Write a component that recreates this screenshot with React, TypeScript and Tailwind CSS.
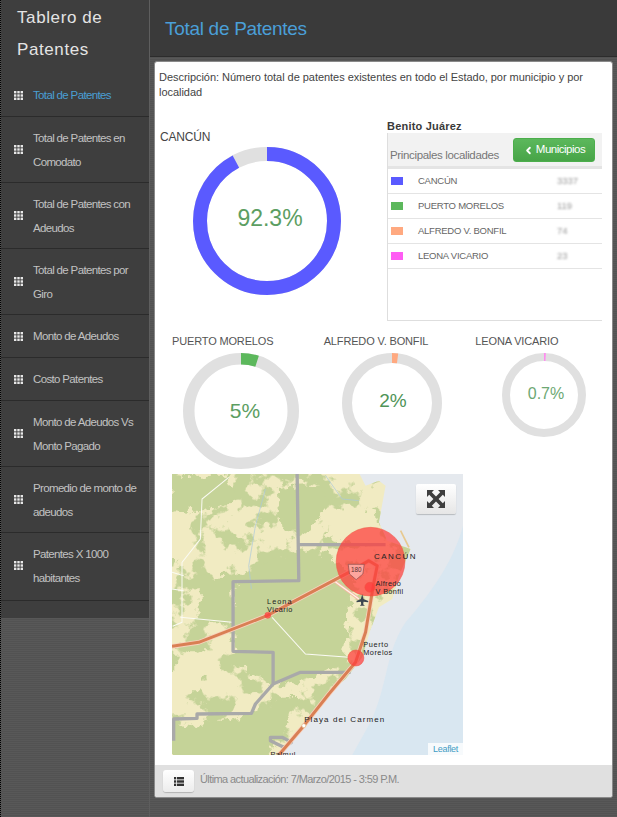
import { ChevronLeft } from 'lucide-react';

const menu = [
  { label: ['Total de Patentes'], active: true },
  { label: ['Total de Patentes en', 'Comodato'] },
  { label: ['Total de Patentes con', 'Adeudos'] },
  { label: ['Total de Patentes por', 'Giro'] },
  { label: ['Monto de Adeudos'] },
  { label: ['Costo Patentes'] },
  { label: ['Monto de Adeudos Vs', 'Monto Pagado'] },
  { label: ['Promedio de monto de', 'adeudos'] },
  { label: ['Patentes X 1000', 'habitantes'] },
];

const localities = [
  { name: 'CANCÚN', value: '3337', swatch: 'bg-[#5a5aff]' },
  { name: 'PUERTO MORELOS', value: '119', swatch: 'bg-[#5cb85c]' },
  { name: 'ALFREDO V. BONFIL', value: '74', swatch: 'bg-[#ffa980]' },
  { name: 'LEONA VICARIO', value: '23', swatch: 'bg-[#ff5cf4]' },
];

const HIGHWAY =
  'M20,542 L100,530 L305,450 L550,320 L610,285 L635,300 L625,350 L600,500 L570,590 L490,685 L415,780 L340,868';

function GridIcon() {
  return (
    <svg width="9" height="9" viewBox="0 0 9 9" fill="#e8e8e8" className="shrink-0">
      {[0, 3.3, 6.6].map((y) =>
        [0, 3.3, 6.6].map((x) => <rect key={`${x}-${y}`} x={x} y={y} width="2.4" height="2.4" />),
      )}
    </svg>
  );
}

function Donut(props: {
  size: number;
  stroke: number;
  percent: number;
  color: string;
  label: string;
  fontSize: number;
  dx: number;
  dy: number;
  textColor?: string;
}) {
  const { size, stroke, percent, color, label, fontSize, dx, dy, textColor = '#5c9e62' } = props;
  const c = size / 2;
  const r = c - stroke / 2;
  return (
    <svg width={size} height={size} viewBox={`0 0 ${size} ${size}`} className="block">
      <circle cx={c} cy={c} r={r} fill="none" stroke="#e0e0e0" strokeWidth={stroke} />
      <circle
        cx={c}
        cy={c}
        r={r}
        fill="none"
        stroke={color}
        strokeWidth={stroke}
        pathLength={100}
        strokeDasharray={`${percent} ${100 - percent}`}
        transform={`rotate(-90 ${c} ${c})`}
      />
      <text x={c + dx} y={c + dy} textAnchor="middle" dominantBaseline="central" fontSize={fontSize} fill={textColor}>
        {label}
      </text>
    </svg>
  );
}

function MapArt() {
  const land =
    'M20,25 H582 L600,60 L640,45 L660,60 L640,170 L665,225 L735,250 L700,330 L680,400 L640,425 L612,500 L590,575 L540,640 L480,690 L420,770 L370,835 L345,868 H20 Z';
  return (
    <svg viewBox="20 25 872 843" className="block h-full w-full" preserveAspectRatio="none">
      <defs>
        <filter id="mottle" x="0" y="0" width="100%" height="100%" colorInterpolationFilters="sRGB">
          <feTurbulence type="fractalNoise" baseFrequency="0.016" numOctaves="5" seed="11" />
          <feColorMatrix type="matrix" values="0 0 0 0 0.773  0 0 0 0 0.827  0 0 0 0 0.596  14 0 0 0 -7.1" />
        </filter>
        <filter id="rough" x="-20%" y="-20%" width="140%" height="140%" colorInterpolationFilters="sRGB">
          <feTurbulence type="fractalNoise" baseFrequency="0.03" numOctaves="4" seed="4" result="n" />
          <feDisplacementMap in="SourceGraphic" in2="n" scale="50" xChannelSelector="R" yChannelSelector="G" />
        </filter>
        <clipPath id="landClip">
          <path d={land} />
        </clipPath>
      </defs>
      <rect x="20" y="25" width="872" height="843" fill="#e5e9ee" />
      <path d="M892,180 C860,300 780,400 720,470 C660,560 670,640 620,760 L560,868 H892 Z" fill="#d9e7f1" />
      <path d={land} fill="#f1ebc2" />
      <g clipPath="url(#landClip)">
        <rect x="20" y="25" width="872" height="843" filter="url(#mottle)" />
        <g filter="url(#rough)" fill="#c5d398">
          <path d="M215,330 L400,250 L500,270 L570,345 L540,480 L535,590 L430,640 L330,660 L205,590 Z" />
          <path d="M340,70 L470,60 L480,140 L420,200 L345,190 Z" />
          <path d="M20,30 L190,30 L210,100 L110,140 L20,130 Z" />
          <path d="M20,790 L250,750 L330,700 L400,700 L350,800 L300,880 H20 Z" />
          <path d="M100,340 L200,330 L210,470 L100,470 Z" />
        </g>
        <g filter="url(#rough)" fill="#f1ebc2">
          <path d="M490,140 L630,130 L640,230 L560,240 L480,210 Z" />
          <path d="M30,560 L150,560 L110,680 L30,680 Z" />
          <path d="M20,190 L80,170 L70,290 L20,300 Z" />
        </g>
      </g>
      <path d="M705,195 L730,245" stroke="#e7c98f" strokeWidth="5" fill="none" />
      <path d="M300,70 L270,180 L250,300 L258,370" stroke="#a9c7dd" strokeWidth="2" fill="none" />
      <path d="M480,30 L530,100 L580,105" stroke="#a9c7dd" strokeWidth="2" fill="none" />
      <g stroke="#fbfbf4" strokeWidth="3" fill="none">
        <path d="M320,455 L420,565 L550,575" />
        <path d="M45,455 L200,470" />
        <path d="M190,35 L110,100 L105,220 L50,290 L50,470 L22,482" />
        <path d="M20,320 L55,330 M20,370 L55,375" />
      </g>
      <g stroke="#a9a9a9" strokeWidth="10" fill="none" strokeLinejoin="round">
        <path d="M395,25 L400,345 L203,348 L203,557 L323,560 L323,655 L270,715 L258,743 L95,745 L95,758 L25,760 L25,825" />
        <path d="M400,237 L660,237" />
        <path d="M323,655 L405,620 L555,620" />
        <path d="M315,815 L350,815 L378,830 L355,845 L315,825 Z" />
      </g>
      <path d="M505,345 L580,400" stroke="#f3b79e" strokeWidth="9" fill="none" />
      <path d="M505,345 L580,400" stroke="#fff3ea" strokeWidth="4" fill="none" />
      <g fill="none" strokeLinejoin="round">
        <path d={HIGHWAY} stroke="#f8d2bd" strokeWidth="14" />
        <path d={HIGHWAY} stroke="#d97f54" strokeWidth="9" />
      </g>
      <circle cx="415" cy="780" r="6" fill="#fff" stroke="#e3b98c" strokeWidth="2" />
      <g fill="#ff3b3b" fillOpacity="0.72" stroke="#f0503c" strokeWidth="1.5">
        <circle cx="615" cy="288" r="103" />
        <circle cx="613" cy="365" r="15" />
        <circle cx="571" cy="577" r="24" />
        <circle cx="307" cy="449" r="9" />
      </g>
      <path d="M548,296 H596 L592,325 L572,342 L552,325 Z" fill="#ffb4ae" fillOpacity="0.8" stroke="#8a4a4a" strokeWidth="2" />
      <text x="572" y="318" fontSize="19" textAnchor="middle" fill="#553333">
        180
      </text>
      <path
        d="M590,386 L594,400 L608,406 V410 L594,408 L593,416 L598,420 H583 L587,416 L586,408 L573,410 V406 L586,400 Z"
        fill="#3c4650"
      />
      <g fill="#222" fontSize="22">
        <text x="625" y="279" letterSpacing="4.5" fontSize="24">
          CANCÚN
        </text>
        <text x="630" y="362" letterSpacing="1">
          Alfredo
        </text>
        <text x="630" y="386" letterSpacing="1">
          V Bonfil
        </text>
        <text x="305" y="415" letterSpacing="3">
          Leona
        </text>
        <text x="305" y="439" letterSpacing="1.5">
          Vicario
        </text>
        <text x="593" y="544" letterSpacing="2">
          Puerto
        </text>
        <text x="593" y="568" letterSpacing="1.5">
          Morelos
        </text>
        <text x="416" y="769" letterSpacing="3.3" fontSize="24">
          Playa del Carmen
        </text>
        <text x="315" y="874" letterSpacing="1.5">
          Palmul
        </text>
      </g>
    </svg>
  );
}

export default function App() {
  return (
    <div className="flex h-[817px] w-[617px] overflow-hidden border-l border-dotted border-black bg-[#555555] bg-[repeating-linear-gradient(0deg,#585858_0px,#585858_1px,#525252_1px,#525252_2px)] font-['Liberation_Sans',Arial,sans-serif]">
      <aside className="h-[618px] w-[148px] shrink-0 bg-[#3e3e3e]">
        <div className="h-[74px] pl-[16px] pt-[2px] text-[17px] leading-[32px] tracking-[0.6px] text-[#e4e4e4]">
          Tablero de
          <br />
          Patentes
        </div>
        {menu.map((item) => (
          <div
            key={item.label[0]}
            className={`flex items-center gap-[10px] border-b border-[#2b2b2b] pl-[13px] text-[11.5px] leading-[24px] tracking-[-0.65px] last:pb-[10px] ${
              item.label.length > 1 ? 'py-[8.5px]' : 'py-[9px]'
            }`}
          >
            <GridIcon />
            <div className={item.active ? 'text-[#4a9fd4]' : 'text-[#c2c2c2]'}>
              {item.label.map((line) => (
                <div key={line} className="whitespace-nowrap">
                  {line}
                </div>
              ))}
            </div>
          </div>
        ))}
      </aside>

      <main className="flex min-w-0 flex-1 flex-col border-l border-[#5e5e5e]">
        <header className="h-[57px] shrink-0 border-b border-[#2c2c2c] bg-[#3a3a3a] pl-[15px] pt-[16px] text-[19px] leading-[26px] tracking-[-0.3px] text-[#4a9fd8]">
          Total de Patentes
        </header>

        <div className="ml-[4px] mr-[4px] mt-[4px] flex h-[737px] flex-col overflow-hidden rounded-[3px] border border-[#8a8a8a] bg-white">
          <div className="relative flex-1">
            <p className="pl-[4px] pr-[8px] pt-[8px] text-[11px] leading-[15px] tracking-[-0.04px] text-[#444]">
              Descripción: Número total de patentes existentes en todo el Estado, por municipio y por localidad
            </p>

            <div className="mt-[19px] flex">
              <div className="w-[232px] shrink-0 pl-[5px]">
                <div className="pt-[11px] text-[12px] leading-[14px] tracking-[-0.2px] text-[#444]">CANCÚN</div>
                <div className="ml-[33px] mt-[3px]">
                  <Donut size={148} stroke={14} percent={92.3} color="#5a5aff" label="92.3%" fontSize={23} dx={3} dy={-3} />
                </div>
              </div>

              <div className="w-[215px] shrink-0">
                <div className="pt-[1px] text-[11px] font-bold leading-[13px] tracking-[0.2px] text-[#3a3a3a]">Benito Juárez</div>
                <div className="h-[188px] border-b border-l border-[#dedede]">
                  <div className="flex h-[36px] items-start justify-between border-b-[3px] border-[#e4e4e4] bg-[#f2f2f2] pl-[2px] pr-[7px]">
                    <span className="pt-[15px] text-[11.5px] leading-[14px] tracking-[-0.35px] text-[#777]">Principales localidades</span>
                    <button className="mt-[5px] flex h-[24px] w-[82px] items-center justify-center gap-[2px] rounded-[3px] border border-[#4cae4c] bg-[linear-gradient(#5cb85c,#47a447)] text-[11.5px] tracking-[-0.5px] text-white">
                      <ChevronLeft size={11} strokeWidth={4} />
                      Municipios
                    </button>
                  </div>
                  {localities.map((row) => (
                    <div key={row.name} className="flex h-[25px] items-center border-b border-[#e4e4e4]">
                      <span className={`ml-[3px] h-[8px] w-[12px] ${row.swatch}`} />
                      <span className="ml-[15px] w-[139px] text-[9.5px] tracking-[-0.25px] text-[#666]">{row.name}</span>
                      <span className="text-[9.5px] text-[#999] blur-[1.1px]">{row.value}</span>
                    </div>
                  ))}
                </div>
              </div>
            </div>

            <div className="ml-[17px] mt-[13px] grid w-[455px] grid-cols-3">
              <div>
                <div className="text-[11px] leading-[14px] tracking-[-0.15px] text-[#555]">PUERTO MORELOS</div>
                <div className="ml-[11px] mt-[5px]">
                  <Donut size={116} stroke={11.5} percent={5} color="#5cb85c" label="5%" fontSize={21} dx={4} dy={-1} />
                </div>
              </div>
              <div>
                <div className="text-[11px] leading-[14px] tracking-[-0.15px] text-[#555]">ALFREDO V. BONFIL</div>
                <div className="ml-[18px] mt-[5px]">
                  <Donut size={100} stroke={10} percent={2} color="#ffa980" label="2%" fontSize={19} dx={1} dy={-3} textColor="#4f9458" />
                </div>
              </div>
              <div>
                <div className="text-[11px] leading-[14px] tracking-[-0.15px] text-[#555]">LEONA VICARIO</div>
                <div className="ml-[27px] mt-[5px]">
                  <Donut size={84} stroke={8} percent={0.7} color="#ff8cf0" label="0.7%" fontSize={16} dx={2} dy={-2} textColor="#6da873" />
                </div>
              </div>
            </div>

            <div className="relative ml-[17px] mt-[5px] h-[281px] w-[291px] overflow-hidden">
              <MapArt />
              <button className="absolute left-[244px] top-[10px] flex h-[30px] w-[40px] items-center justify-center rounded-[2px] bg-[linear-gradient(#ffffff,#e6e6e6)] shadow-[0_1px_1px_rgba(0,0,0,0.2)]">
                <svg width="20" height="20" viewBox="0 0 20 20" fill="#3f3f3f">
                  <path d="M1,1 H8 L5.8,3.2 L10,7.4 L14.2,3.2 L12,1 H19 V8 L16.8,5.8 L12.6,10 L16.8,14.2 L19,12 V19 H12 L14.2,16.8 L10,12.6 L5.8,16.8 L8,19 H1 V12 L3.2,14.2 L7.4,10 L3.2,5.8 L1,8 Z" />
                </svg>
              </button>
              <div className="absolute bottom-0 right-0 bg-white/80 px-[5px] text-[9px] leading-[12px] tracking-[-0.3px] text-[#3f9cc4]">
                Leaflet
              </div>
            </div>
          </div>

          <footer className="flex h-[32px] shrink-0 items-center bg-[#e0e0e0] pl-[8px]">
            <button className="flex h-[22px] w-[31px] items-center justify-center rounded-[3px] bg-[linear-gradient(#ffffff,#ececec)] shadow-[0_1px_1px_rgba(0,0,0,0.2)]">
              <svg width="10" height="9" viewBox="0 0 10 9" fill="#333">
                <rect x="0" y="0" width="2.2" height="2.4" />
                <rect x="3" y="0" width="7" height="2.4" />
                <rect x="0" y="3.3" width="2.2" height="2.4" />
                <rect x="3" y="3.3" width="7" height="2.4" />
                <rect x="0" y="6.6" width="2.2" height="2.4" />
                <rect x="3" y="6.6" width="7" height="2.4" />
              </svg>
            </button>
            <span className="ml-[6px] -mt-[3px] text-[11px] tracking-[-0.6px] text-[#8a8a8a]">
              Última actualización: 7/Marzo/2015 - 3:59 P.M.
            </span>
          </footer>
        </div>
      </main>
    </div>
  );
}
